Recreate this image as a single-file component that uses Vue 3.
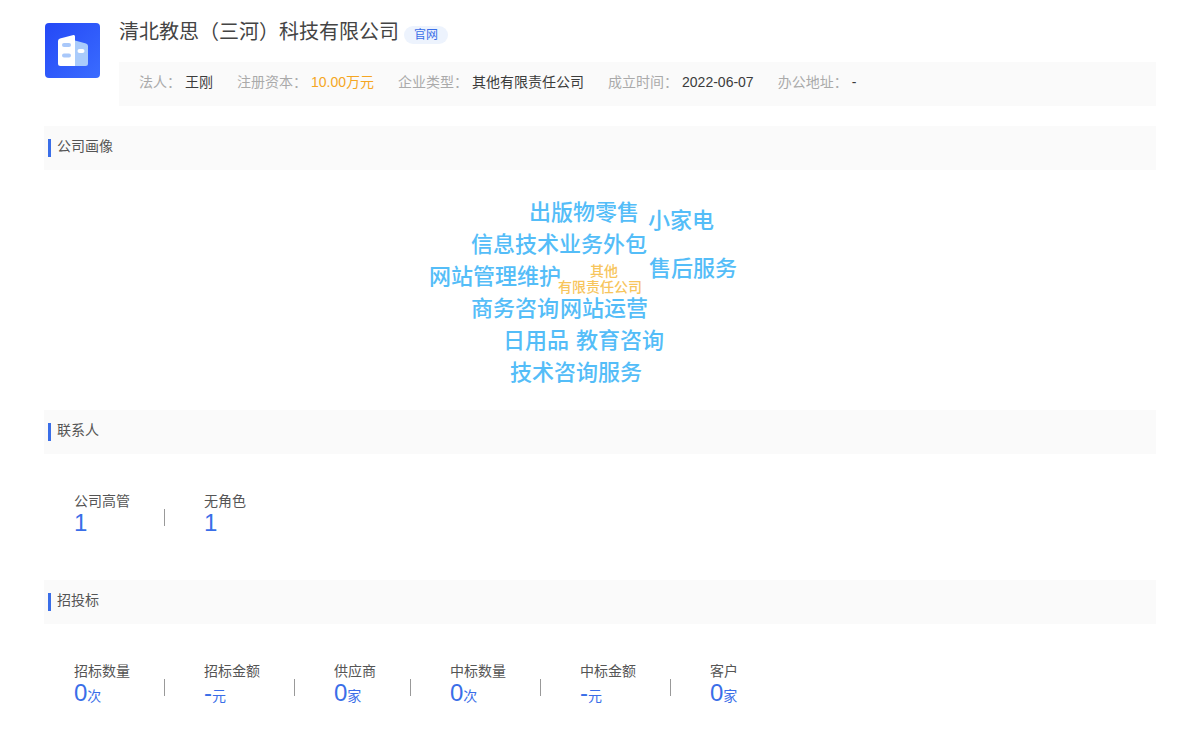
<script setup>
const facts = [
  { label: '法人：', value: '王刚' },
  { label: '注册资本：', value: '10.00万元', accent: true },
  { label: '企业类型：', value: '其他有限责任公司' },
  { label: '成立时间：', value: '2022-06-07' },
  { label: '办公地址：', value: '-' },
]

const words = [
  { text: '出版物零售', x: 129, y: 27 },
  { text: '小家电', x: 248, y: 35 },
  { text: '信息技术业务外包', x: 71, y: 59 },
  { text: '售后服务', x: 249, y: 83 },
  { text: '网站管理维护', x: 29, y: 91 },
  { text: '其他', x: 190, y: 93, small: true },
  { text: '有限责任公司', x: 158, y: 109, small: true },
  { text: '商务咨询', x: 71, y: 123 },
  { text: '网站运营', x: 160, y: 123 },
  { text: '日用品', x: 103, y: 155 },
  { text: '教育咨询', x: 176, y: 155 },
  { text: '技术咨询服务', x: 110, y: 187 },
]

const groups = [
  {
    title: '联系人',
    stats: [
      { label: '公司高管', value: '1', unit: '' },
      { label: '无角色', value: '1', unit: '' },
    ],
  },
  {
    title: '招投标',
    stats: [
      { label: '招标数量', value: '0', unit: '次' },
      { label: '招标金额', value: '-', unit: '元' },
      { label: '供应商', value: '0', unit: '家' },
      { label: '中标数量', value: '0', unit: '次' },
      { label: '中标金额', value: '-', unit: '元' },
      { label: '客户', value: '0', unit: '家' },
    ],
  },
]
</script>

<template>
  <main class="page" lang="zh-CN">
    <header class="company">
      <svg class="logo" viewBox="0 0 55 55" aria-hidden="true">
        <defs>
          <linearGradient id="logo-bg" x1="0" y1="0" x2="1" y2="1">
            <stop offset="0" stop-color="#2448f6" />
            <stop offset="1" stop-color="#3a6cff" />
          </linearGradient>
        </defs>
        <rect width="55" height="55" rx="4" fill="url(#logo-bg)" />
        <path d="M30 17.500L41 20.500Q43 21 43 23V40.500Q43 43 40.500 43H30Z" fill="#a9cbfb" />
        <path d="M15 15.500L28.500 12Q30 11.700 30 13.500V43H15.500Q13 43 13 40.500V18Q13 16 15 15.500Z" fill="#fff" />
        <rect x="17" y="20" width="9" height="4" rx="2" fill="#a9c8fa" />
        <rect x="17" y="30.500" width="9" height="4" rx="2" fill="#a9c8fa" />
        <rect x="32.500" y="26" width="7" height="4" rx="2" fill="#fff" />
      </svg>
      <div class="summary">
        <div class="name-row">
          <h1>清北教思（三河）科技有限公司</h1>
          <a class="site" href="#">官网</a>
        </div>
        <dl class="facts">
          <div v-for="f in facts" :key="f.label" class="fact">
            <dt>{{ f.label }}</dt>
            <dd :class="{ accent: f.accent }">{{ f.value }}</dd>
          </div>
        </dl>
      </div>
    </header>

    <section>
      <h2>公司画像</h2>
      <div class="cloud-wrap">
        <div class="cloud">
          <span
            v-for="w in words"
            :key="w.text"
            class="word"
            :class="{ small: w.small }"
            :style="{ left: w.x + 'px', top: w.y + 'px' }"
          >{{ w.text }}</span>
        </div>
      </div>
    </section>

    <section v-for="g in groups" :key="g.title">
      <h2>{{ g.title }}</h2>
      <ul class="stats">
        <li v-for="s in g.stats" :key="s.label">
          <span class="label">{{ s.label }}</span>
          <span class="figure">{{ s.value }}<small v-if="s.unit">{{ s.unit }}</small></span>
        </li>
      </ul>
    </section>
  </main>
</template>

<style>
body {
  background: #fff;
}
</style>

<style scoped>
.page {
  padding: 20px 44px 0;
  font-family: "Liberation Sans", "Noto Sans CJK SC", sans-serif;
  font-size: 14px;
  line-height: 20px;
  color: #555;
}

h1,
h2,
dl,
dd,
ul {
  margin: 0;
  padding: 0;
  font-weight: 400;
}

.company {
  display: flex;
  gap: 19px;
  margin-bottom: 20px;
}

.logo {
  flex: none;
  width: 55px;
  height: 55px;
  margin-top: 3px;
  margin-left: 1px;
}

.summary {
  flex: 1;
}

.name-row {
  display: flex;
  align-items: flex-start;
  gap: 5px;
  margin-bottom: 18px;
}

h1 {
  font-size: 20px;
  line-height: 24px;
  color: #444;
}

.site {
  margin-top: 6px;
  padding: 0 10px;
  border-radius: 9px;
  background: #edf3fd;
  color: #3a6ee8;
  font-size: 12px;
  line-height: 18px;
  text-decoration: none;
}

.facts {
  display: flex;
  flex-wrap: wrap;
  column-gap: 24px;
  padding: 10px 20px 14px;
  background: #fafafa;
}

.fact {
  display: flex;
  gap: 4px;
}

dt {
  color: #aaa;
}

dd {
  color: #3c3c3c;
}

.accent {
  color: #f5a623;
}

h2 {
  display: flex;
  align-items: center;
  gap: 6px;
  height: 44px;
  padding: 0 0 4px 4px;
  box-sizing: border-box;
  background: #fafafa;
  font-size: 14px;
}

h2::before {
  content: "";
  width: 3px;
  height: 18px;
  margin-top: 4px;
  background: #3a6ee8;
}

.cloud-wrap {
  display: flex;
  justify-content: center;
}

.cloud {
  position: relative;
  width: 400px;
  height: 240px;
}

.word {
  position: absolute;
  white-space: nowrap;
  font-size: 22px;
  font-weight: 500;
  line-height: 32px;
  color: #54bdf8;
}

.word.small {
  font-size: 14px;
  line-height: 16px;
  color: #f7c55c;
}

.stats {
  display: flex;
  min-height: 89px;
  padding: 37px 30px 0;
  list-style: none;
}

.stats li {
  display: flex;
  flex-direction: column;
}

.stats li:not(:last-child) {
  margin-right: 39px;
  padding-right: 35px;
  background: linear-gradient(#999, #999) right 18px / 1px 17px no-repeat;
}

.figure {
  font-size: 24px;
  line-height: 24px;
  color: #3a6ee8;
}

.figure small {
  font-size: 14px;
}
</style>
